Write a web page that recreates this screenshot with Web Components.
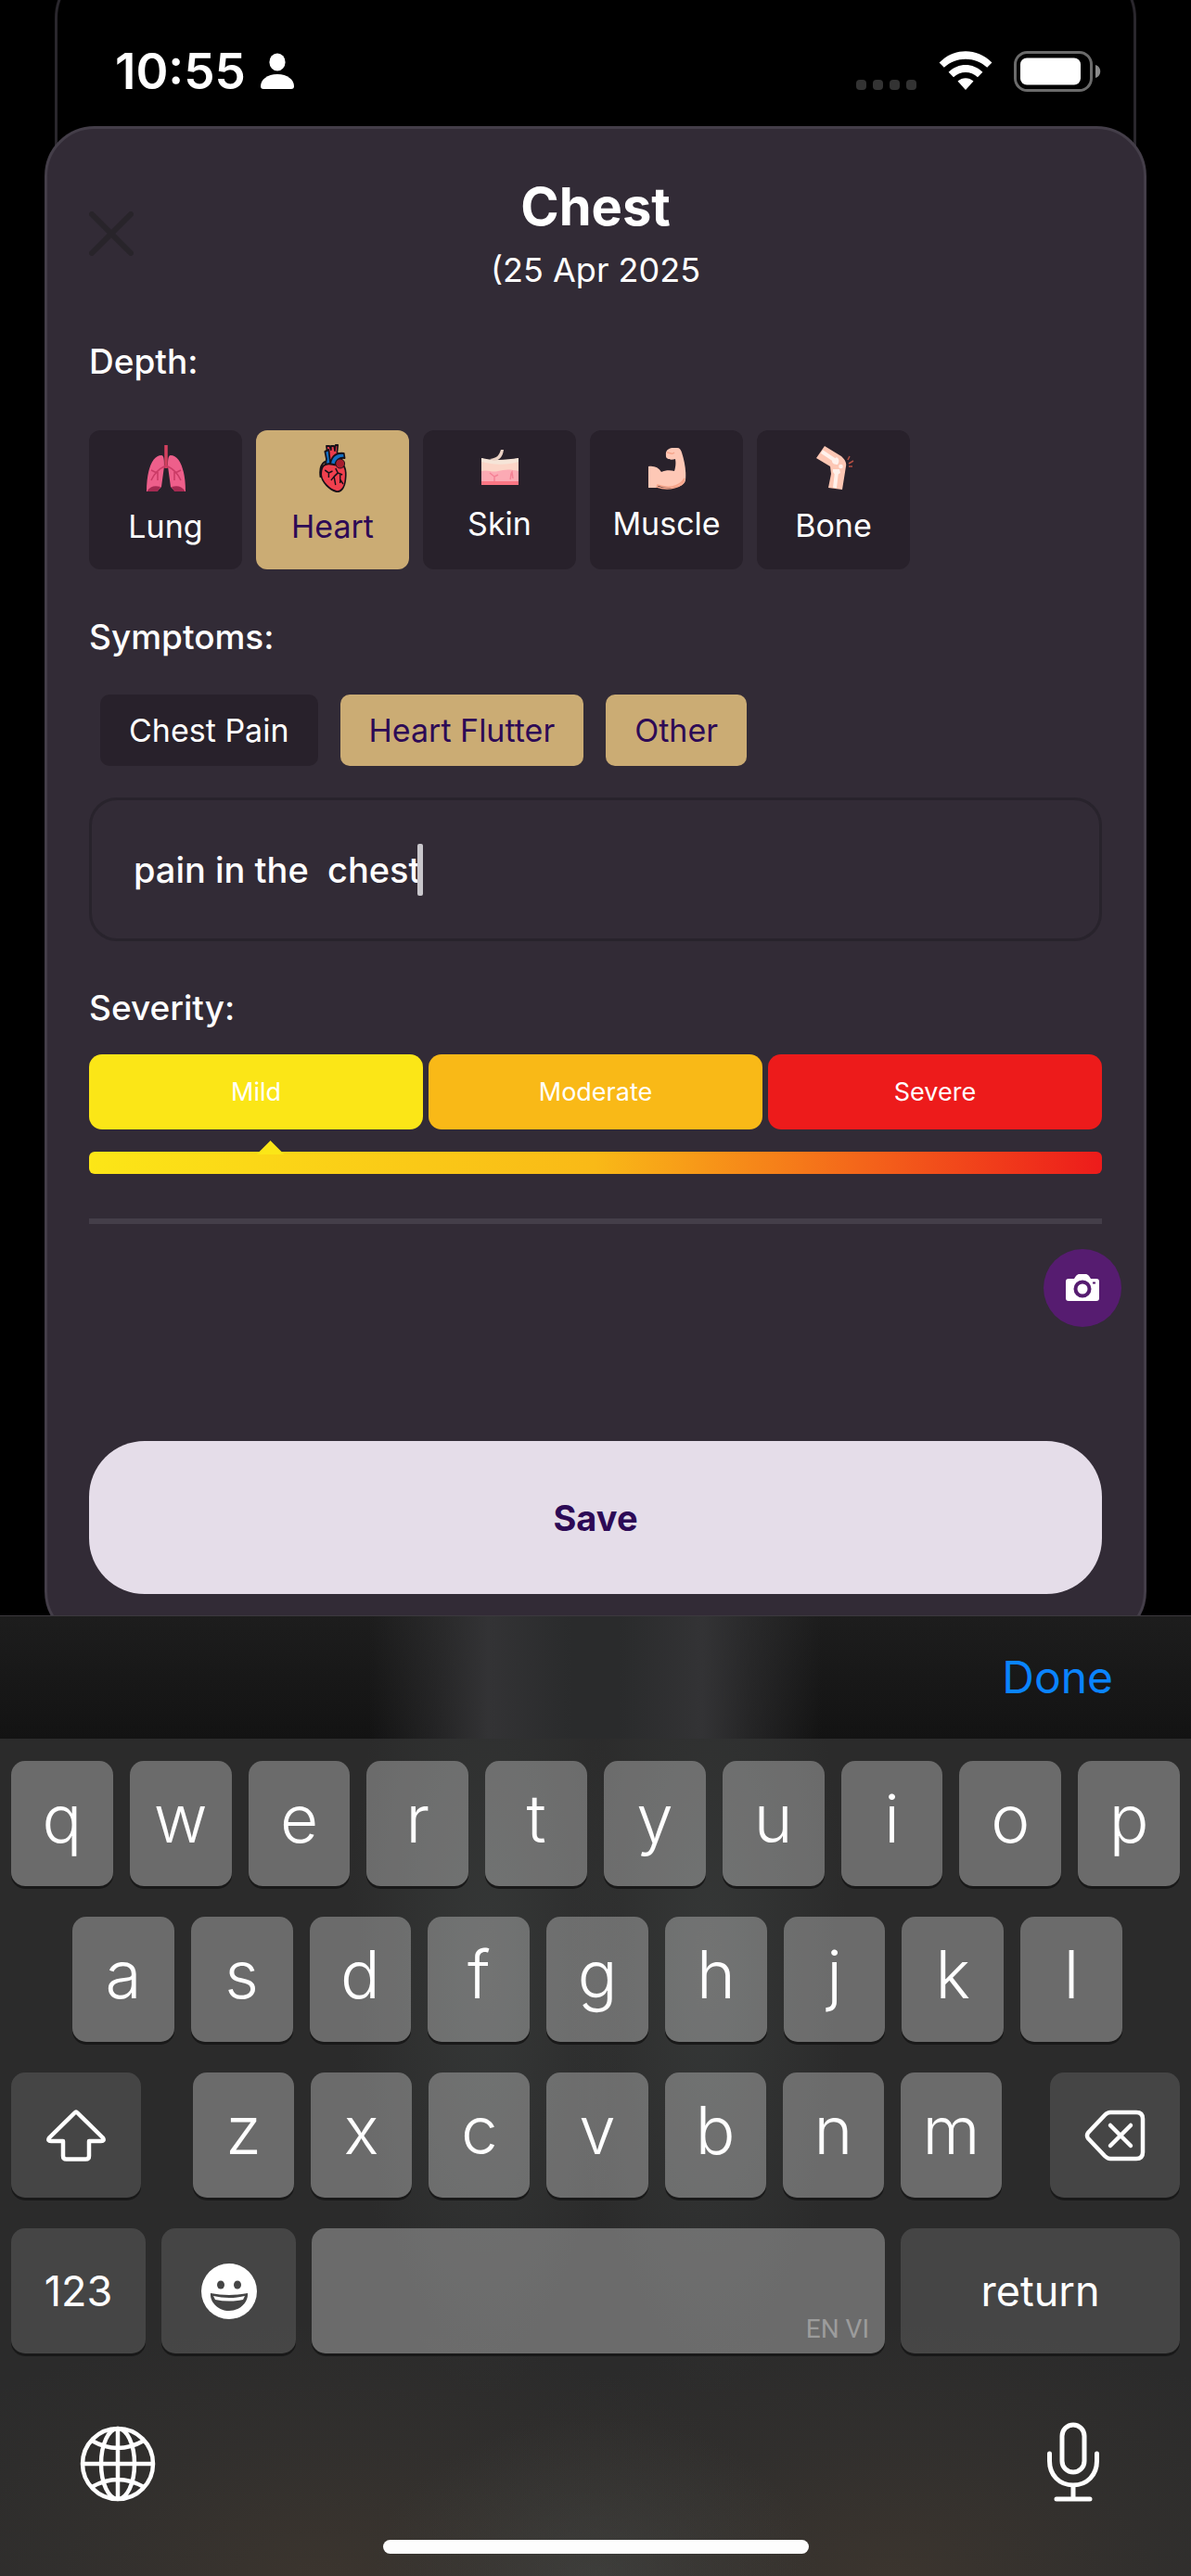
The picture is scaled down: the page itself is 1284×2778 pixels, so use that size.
<!DOCTYPE html>
<html lang="en">
<head>
<meta charset="utf-8">
<meta name="viewport" content="width=device-width, initial-scale=1">
<title>Chest</title>
<style>
  html, body { margin: 0; background: #000; }
  body { font-family: Inter, "Liberation Sans", sans-serif; color: #fff; }
</style>
</head>
<body>
<app-screen></app-screen>
<script>
const BASE = `
  *, *::before, *::after { box-sizing: border-box; }
  button, input { font: inherit; color: inherit; border: 0; background: none; padding: 0; margin: 0; }
  button { cursor: pointer; }
  svg { display: block; }
`;

function define(name, css, html) {
  const template = document.createElement('template');
  customElements.define(name, class extends HTMLElement {
    constructor() {
      super();
      const root = this.attachShadow({ mode: 'open' });
      template.innerHTML = `<style>${BASE}${css}</style>${html}`;
      root.append(template.content.cloneNode(true));
    }
  });
}

/* Time, person badge, signal, wifi and battery */
define('status-bar', `
  :host { display: flex; justify-content: space-between; align-items: center; padding: 47px 95px 29px 124px; }
  .left, .right { display: flex; align-items: center; }
  .left { gap: 16px; }
  .right { gap: 23px; }
  time { font-size: 53px; line-height: 60px; font-weight: 600; }
`, `
  <div class="left">
    <time>10:55</time>
    <svg width="36" height="40" viewBox="0 0 36 40" fill="#fff"><ellipse cx="18" cy="10" rx="8.6" ry="9.4"/><path d="M3 39C1 39 0 38 0 36 0 29 7 23 18 23S36 29 36 36c0 2-1 3-3 3Z"/></svg>
  </div>
  <div class="right">
    <svg width="66" height="44" viewBox="0 0 66 44" fill="#333"><rect y="31" width="11" height="11" rx="4"/><rect x="18" y="31" width="11" height="11" rx="4"/><rect x="36" y="31" width="11" height="11" rx="4"/><rect x="54" y="31" width="11" height="11" rx="4"/></svg>
    <svg width="58" height="44" viewBox="0 0 58 44" fill="#fff"><path d="M.6 12.500C17-3.700 41-3.700 57.400 12.500L52.200 17.800C39 5.800 19 5.800 5.800 17.800Z"/><path d="M10.600 22.800C21.500 12.500 36.500 12.500 47.400 22.800L42 28.200C34.500 21.300 23.500 21.300 16 28.200Z"/><path d="M20.500 32.600C25.500 28 32.500 28 37.500 32.600L29 42Z"/></svg>
    <svg width="96" height="44" viewBox="0 0 96 44"><rect x="1.500" y="1.500" width="82" height="41" rx="13" fill="none" stroke="#6b6b6b" stroke-width="3"/><rect x="7" y="7.500" width="65" height="29" rx="7" fill="#fff"/><path d="M88 15c7 2 7 12 0 14Z" fill="#8a8a8a"/></svg>
  </div>
`);

define('section-label', `
  :host { display: block; font-size: 37px; line-height: 54px; font-weight: 500; }
`, `<slot></slot>`);

define('depth-tile', `
  :host { display: block; flex: 0 1 165px; }
  button { width: 100%; height: 150px; border-radius: 12px; background: #28212b; padding-top: 12px;
           display: flex; flex-direction: column; align-items: center; justify-content: flex-start; gap: 12px;
           font-size: 34px; line-height: 50px; }
  :host([selected]) button { background: #cbac74; color: #2d0a56; }
`, `<button type="button"><slot name="icon"></slot><span><slot></slot></span></button>`);

define('symptom-chip', `
  :host { display: block; }
  button { height: 77px; border-radius: 10px; background: #28212b; padding: 0 31px; font-size: 34px; line-height: 50px; }
  :host([selected]) button { background: #cbac74; color: #2d0a56; }
`, `<button type="button"><slot></slot></button>`);

define('note-field', `
  :host { display: flex; align-items: center; height: 155px; padding: 0 45px; border: 3px solid #28232c; border-radius: 30px; }
  input { font-size: 38px; line-height: 54px; font-weight: 500; outline: 0; field-sizing: content; }
  .caret { flex: none; width: 6px; height: 56px; margin-left: -4px; border-radius: 2px; background: #c9c7cc; }
`, `<input type="text" aria-label="Other symptom" value="pain in the  chest"><span class="caret"></span>`);

define('severity-picker', `
  :host { display: grid; gap: 24px; }
  .levels { display: grid; grid-template-columns: repeat(3, 1fr); gap: 6px; }
  .levels button { height: 81px; border-radius: 14px; font-size: 27px; line-height: 36px; }
  .mild { background: #fbe617; }
  .moderate { background: #f9b917; }
  .severe { background: #ed1b1b; }
  input { appearance: none; -webkit-appearance: none; display: block; width: 100%; height: 24px; border-radius: 6px;
          background: linear-gradient(90deg, #fce617, #f9b917 50%, #f4661a 76%, #ed1b1b); }
  input::-webkit-slider-runnable-track { height: 24px; }
  input::-webkit-slider-thumb { -webkit-appearance: none; width: 30px; height: 15px; margin-top: -12px;
          background: #fbe617; clip-path: polygon(50% 0, 100% 100%, 0 100%); }
`, `
  <div class="levels">
    <button type="button" class="mild">Mild</button>
    <button type="button" class="moderate">Moderate</button>
    <button type="button" class="severe">Severe</button>
  </div>
  <input type="range" min="0" max="100" value="17" aria-label="Severity">
`);

define('entry-sheet', `
  :host { display: block; position: relative; margin: 0 48px -28px; padding: 51px 45px 48px;
          background: #322b36; border: 3px solid #443e49; border-radius: 54px; }
  header { display: grid; grid-template-columns: 48px 1fr 48px; align-items: center; text-align: center; margin-bottom: 49px; }
  h1 { margin: 0 0 12px; font-size: 56px; line-height: 66px; font-weight: 700; }
  p { margin: 0; font-size: 36px; line-height: 46px; }
  .tiles { display: flex; gap: 15px; margin: 47px 0 46px; }
  .chips { display: flex; gap: 24px; margin: 35px 12px 34px; }
  note-field { margin-bottom: 45px; }
  severity-picker { margin: 23px 0 48px; }
  hr { height: 6px; margin: 0 0 27px; border: 0; background: #443e49; }
  .camera { display: grid; place-items: center; width: 84px; height: 84px; border-radius: 50%;
            background: #561c70; margin: 0 -21px 123px auto; }
  .save { width: 100%; height: 165px; border-radius: 60px; background: #e5dde9; color: #2d0a56;
          font-size: 38px; line-height: 54px; font-weight: 700; }
`, `
  <header>
    <button type="button" aria-label="Close"><svg width="48" height="48" viewBox="0 0 48 48" fill="none" stroke="#28242a" stroke-width="6" stroke-linecap="round"><path d="M3 3 45 45M45 3 3 45"/></svg></button>
    <div><h1>Chest</h1><p>(25 Apr 2025</p></div>
  </header>

  <section-label>Depth:</section-label>
  <div class="tiles">
    <depth-tile>
      <svg slot="icon" width="48" height="55" viewBox="0 0 48 55">
        <path d="M19 15C10 15 3 29 3 54l11 0 5-5 3-22c0-6 0-12-3-12ZM29 15c9 0 16 14 16 39l-11 0-5-5-3-22c0-6 0-12 3-12Z" fill="#ee5f8b"/>
        <path d="M4 53c3-4 7-6 14-4l-3 5H4ZM44 53c-3-4-7-6-14-4l3 5h11Z" fill="#a52a52"/>
        <path d="M24 4v25" stroke="#d4405f" stroke-width="3.500"/>
        <path d="M24 26C17 29 12 33 8 42M14 34 8 31M15 33v9M24 26c7 3 12 7 16 16M34 34l6-3M33 33v9" stroke="#cb3b66" stroke-width="1.600" fill="none"/>
      </svg>Lung
    </depth-tile>
    <depth-tile selected>
      <svg slot="icon" width="48" height="55" viewBox="0 0 48 55" stroke="#171018" stroke-width="2" stroke-linejoin="round">
        <g transform="translate(3 0) scale(.82 1)">
        <path d="M20 25 17 5h4l2 4V5h4l1 5 1-6h3l-1 8 7 4-4 12Z" fill="#e93c4c"/>
        <path d="M15 11l5-2 2 14-4 7-3-2 2-9ZM22 26c1-9 7-14 18-13l1 5c-7-1-12 2-13 9Z" fill="#1270c4"/>
        <path d="M12 24 9 31v7c-1-6 0-13 6-16Z" fill="#b81f32"/>
        <path d="M16 25c7-3 12 3 20-1 6 2 7 10 6 17-1 9-6 14-12 13C21 52 11 44 10 36c0-5 1-10 6-11Z" fill="#f0404e"/>
        <ellipse cx="35" cy="24" rx="6" ry="5" fill="#a71c2e" stroke-width="1"/>
        <path d="m15 31 5 3v5M20 34l5-2M29 29l3 5-5 4 2 9M32 34l6 2M35 36v9M27 38l-4 4M35 41l4 5" fill="none" stroke-width="1.700"/>
        </g>
      </svg>Heart
    </depth-tile>
    <depth-tile>
      <svg slot="icon" width="48" height="52" viewBox="0 0 48 52">
        <path d="M4 18c9 4 26 4 40 0v29H4Z" fill="#fcd5c7"/>
        <path d="M4 18c12 3 27 2 40 0v4C30 26 16 25 4 22Z" fill="#f6e5d8"/>
        <path d="M13 19c8-1 10-4 12-10h3c-1 8-5 12-11 12Z" fill="#ecd3c6"/>
        <path d="M4 32c7-2 11 2 18 0s14-2 22 0v11H4Z" fill="#fcaab4"/><path d="M4 43h40v4H4Z" fill="#fb7684"/>
        <path d="M13 34l5 4v5M18 38l4-2M35 41c1-2 0-5 2-8l1 7" stroke="#f58296" stroke-width="1.500" fill="none"/>
      </svg>Skin
    </depth-tile>
    <depth-tile>
      <svg slot="icon" width="48" height="52" viewBox="0 0 48 52">
        <path d="M4 27c6-1 11 1 14 6 4-2 10-2 14-1 1-3 2-8 1-13-5 2-11 0-10-4-1-6 4-8 8-8h4c3 0 4 2 5 5 3 9 5 20 4 30-2 9-19 10-30 5l-1 3H4Z" fill="#fec8b6"/>
        <path d="M14 47c11 4 23 3 29-7-1 11-19 13-30 9ZM24 12c4 0 5 3 8 0" fill="none" stroke="#f6a58b" stroke-width="1.500"/>
      </svg>Muscle
    </depth-tile>
    <depth-tile>
      <svg slot="icon" width="48" height="54" viewBox="0 0 48 54">
        <path d="M14 5 5 18l15 9 1 8-3 15 15 2 4-25c1-5-2-8-5-11Z" fill="#fdc7b4"/>
        <path d="m11 11 15 10M27 33l-2 17" stroke="#fff1eb" stroke-width="4"/>
        <path d="M27 17c3 2 3 5 1 8-3 0-6-1-6-4ZM23 30h7l1 4-5 3-3-4Z" fill="#fff1eb"/><circle cx="31.500" cy="27" r="2.300" fill="#fff1eb"/>
        <path d="m39 20 2-4M40 24l5-3M40 27h4" stroke="#b54f43" stroke-width="1.500"/>
      </svg>Bone
    </depth-tile>
  </div>

  <section-label>Symptoms:</section-label>
  <div class="chips">
    <symptom-chip>Chest Pain</symptom-chip>
    <symptom-chip selected>Heart Flutter</symptom-chip>
    <symptom-chip selected>Other</symptom-chip>
  </div>
  <note-field></note-field>

  <section-label>Severity:</section-label>
  <severity-picker></severity-picker>
  <hr>
  <button type="button" class="camera" aria-label="Add photo">
    <svg width="36" height="30" viewBox="0 0 36 30"><path d="M3 5h6l2-3c1-1 2-2 3-2h8c1 0 2 1 3 2l2 3h6c2 0 3 1 3 3v18c0 2-1 3-3 3H3c-2 0-3-1-3-3V8c0-2 1-3 3-3Z" fill="#fff"/><circle cx="18" cy="16" r="7.500" fill="#fff" stroke="#561c70" stroke-width="4"/><path d="M29 9.500h3" stroke="#561c70" stroke-width="2"/></svg>
  </button>
  <button type="button" class="save">Save</button>
`);

define('key-cap', `
  :host { display: block; flex: 1 1 0; min-width: 0; }
  button { display: flex; align-items: center; justify-content: center; width: 100%; height: 135px;
           padding-bottom: 12px; border-radius: 15px; background: rgba(255,255,255,.3); box-shadow: 0 3px 0 #191919;
           font-size: 71px; line-height: 84px; font-weight: 350; }
  :host([dark]) button { background: rgba(255,255,255,.125); padding: 0; font-size: 45px; line-height: 54px; font-weight: 400; }
  :host([space]) button { padding: 0 17px 8px; align-items: flex-end; justify-content: flex-end; color: #9c9c9c;
           font-family: Roboto, sans-serif; font-size: 28px; line-height: 36px; font-weight: 400; }
`, `<button type="button"><slot></slot></button>`);

define('soft-keyboard', `
  :host { display: block; border-top: 1px solid #3c393e; padding-bottom: 24px;
    background:
      radial-gradient(ellipse 150px 460px at 524px 380px, rgba(80,88,86,.28), rgba(80,88,86,.14) 50%, transparent),
      radial-gradient(ellipse 150px 460px at 764px 380px, rgba(80,88,86,.28), rgba(80,88,86,.14) 50%, transparent),
      radial-gradient(ellipse 240px 170px at 50% 100%, rgba(76,80,78,.4), rgba(76,80,78,.16) 55%, transparent),
      radial-gradient(ellipse 520px 270px at 27% 100%, rgba(68,58,48,.65), rgba(62,56,50,.3) 55%, transparent),
      radial-gradient(ellipse 520px 270px at 75% 100%, rgba(68,58,48,.65), rgba(62,56,50,.3) 55%, transparent),
      #2b2b2b; }
  .bar { display: flex; align-items: center; justify-content: flex-end; height: 132px; padding: 0 84px;
    background:
      linear-gradient(90deg, transparent 31%, rgba(54,54,56,.5) 37%, #333335 41%, #2a2b2c 48%, #2a2b2c 52%, #333335 59%, rgba(54,54,56,.5) 63%, transparent 69%),
      linear-gradient(#1d1d1d, #131313); }
  .done { color: #0a84ff; font-size: 48px; line-height: 60px; }
  .keys { display: grid; gap: 33px; padding: 24px 12px 0; }
  .row { display: flex; gap: 18px; }
  .second { padding: 0 62px 0 66px; }
  .third { gap: 0; }
  .third > key-cap { flex: none; width: 140px; }
  .letters { display: flex; gap: 18px; flex: 1; margin: 0 52px 0 56px; }
  .fourth { gap: 17px; }
  .w145 { flex: none; width: 145px; }
  .w301 { flex: none; width: 301px; }
  .foot { display: flex; justify-content: space-between; align-items: center; padding: 74px 98px 0 86px; }
  .home { width: 459px; height: 15px; margin: 39px auto 0; border-radius: 8px; background: #fdfdfd; }
`, `
  <div class="bar"><button type="button" class="done">Done</button></div>
  <div class="keys">
    <div class="row">${[...'qwertyuiop'].map(c => `<key-cap>${c}</key-cap>`).join('')}</div>
    <div class="row second">${[...'asdfghjkl'].map(c => `<key-cap>${c}</key-cap>`).join('')}</div>
    <div class="row third">
      <key-cap dark><svg width="64" height="56" viewBox="0 0 64 56" fill="none" stroke="#fff" stroke-width="4.500" stroke-linejoin="round"><path d="M30.500 3.500Q32 2 33.500 3.500L61 30.500Q63 34 59 34H46V50Q46 53.500 42.500 53.500H21.500Q18 53.500 18 50V34H5Q1 34 3 30.500Z"/></svg></key-cap>
      <div class="letters">${[...'zxcvbnm'].map(c => `<key-cap>${c}</key-cap>`).join('')}</div>
      <key-cap dark><svg width="66" height="56" viewBox="0 0 66 56" fill="none" stroke="#fff" stroke-width="4.500" stroke-linecap="round" stroke-linejoin="round"><path d="M28 3H56Q63 3 63 10V46Q63 53 56 53H28Q25 53 22 50L4 31Q2 28 4 25L22 6Q25 3 28 3Z"/><path d="M28 17 50 39M50 17 28 39"/></svg></key-cap>
    </div>
    <div class="row fourth">
      <key-cap dark class="w145">123</key-cap>
      <key-cap dark class="w145"><svg width="62" height="62" viewBox="0 0 62 62"><circle cx="31" cy="31" r="30" fill="#fff"/><ellipse cx="22" cy="24" rx="4" ry="4.500" fill="#454545"/><ellipse cx="40" cy="24" rx="4" ry="4.500" fill="#454545"/><path d="M11 33Q31 37 51 33C52 42 43 52 31 52S10 42 11 33Z" fill="#454545"/><path d="M14 36Q31 40 48 36L46 40Q31 43 16 40Z" fill="#fff"/></svg></key-cap>
      <key-cap space>EN VI</key-cap>
      <key-cap dark class="w301">return</key-cap>
    </div>
  </div>
  <div class="foot">
    <button type="button" aria-label="Next keyboard"><svg width="82" height="86" viewBox="0 -3 82 86" fill="none" stroke="#fff" stroke-width="4.500"><circle cx="41" cy="41" r="38"/><ellipse cx="41" cy="41" rx="18" ry="38"/><path d="M41 3V79M3 41H79M13 16Q41 32 69 16M13 66Q41 50 69 66"/></svg></button>
    <button type="button" aria-label="Dictate"><svg width="58" height="88" viewBox="0 0 58 88" fill="none" stroke="#fff" stroke-width="5" stroke-linecap="round"><rect x="17" y="3" width="24" height="51" rx="12"/><path d="M3.500 34V42C3.500 57 14 68 29 68S54.500 57 54.500 42V34M29 68V83M11 83H47"/></svg></button>
  </div>
  <div class="home"></div>
`);

define('app-screen', `
  :host { display: block; min-height: 100vh; background: #000; }
  .stage { position: relative; overflow: hidden; }
  .behind { position: absolute; inset: -40px 59px 0; border: 3px solid #2a272d; border-radius: 60px; }
  status-bar { position: relative; }
`, `
  <div class="stage">
    <div class="behind"></div>
    <status-bar></status-bar>
    <entry-sheet></entry-sheet>
  </div>
  <soft-keyboard></soft-keyboard>
`);
</script>
</body>
</html>
